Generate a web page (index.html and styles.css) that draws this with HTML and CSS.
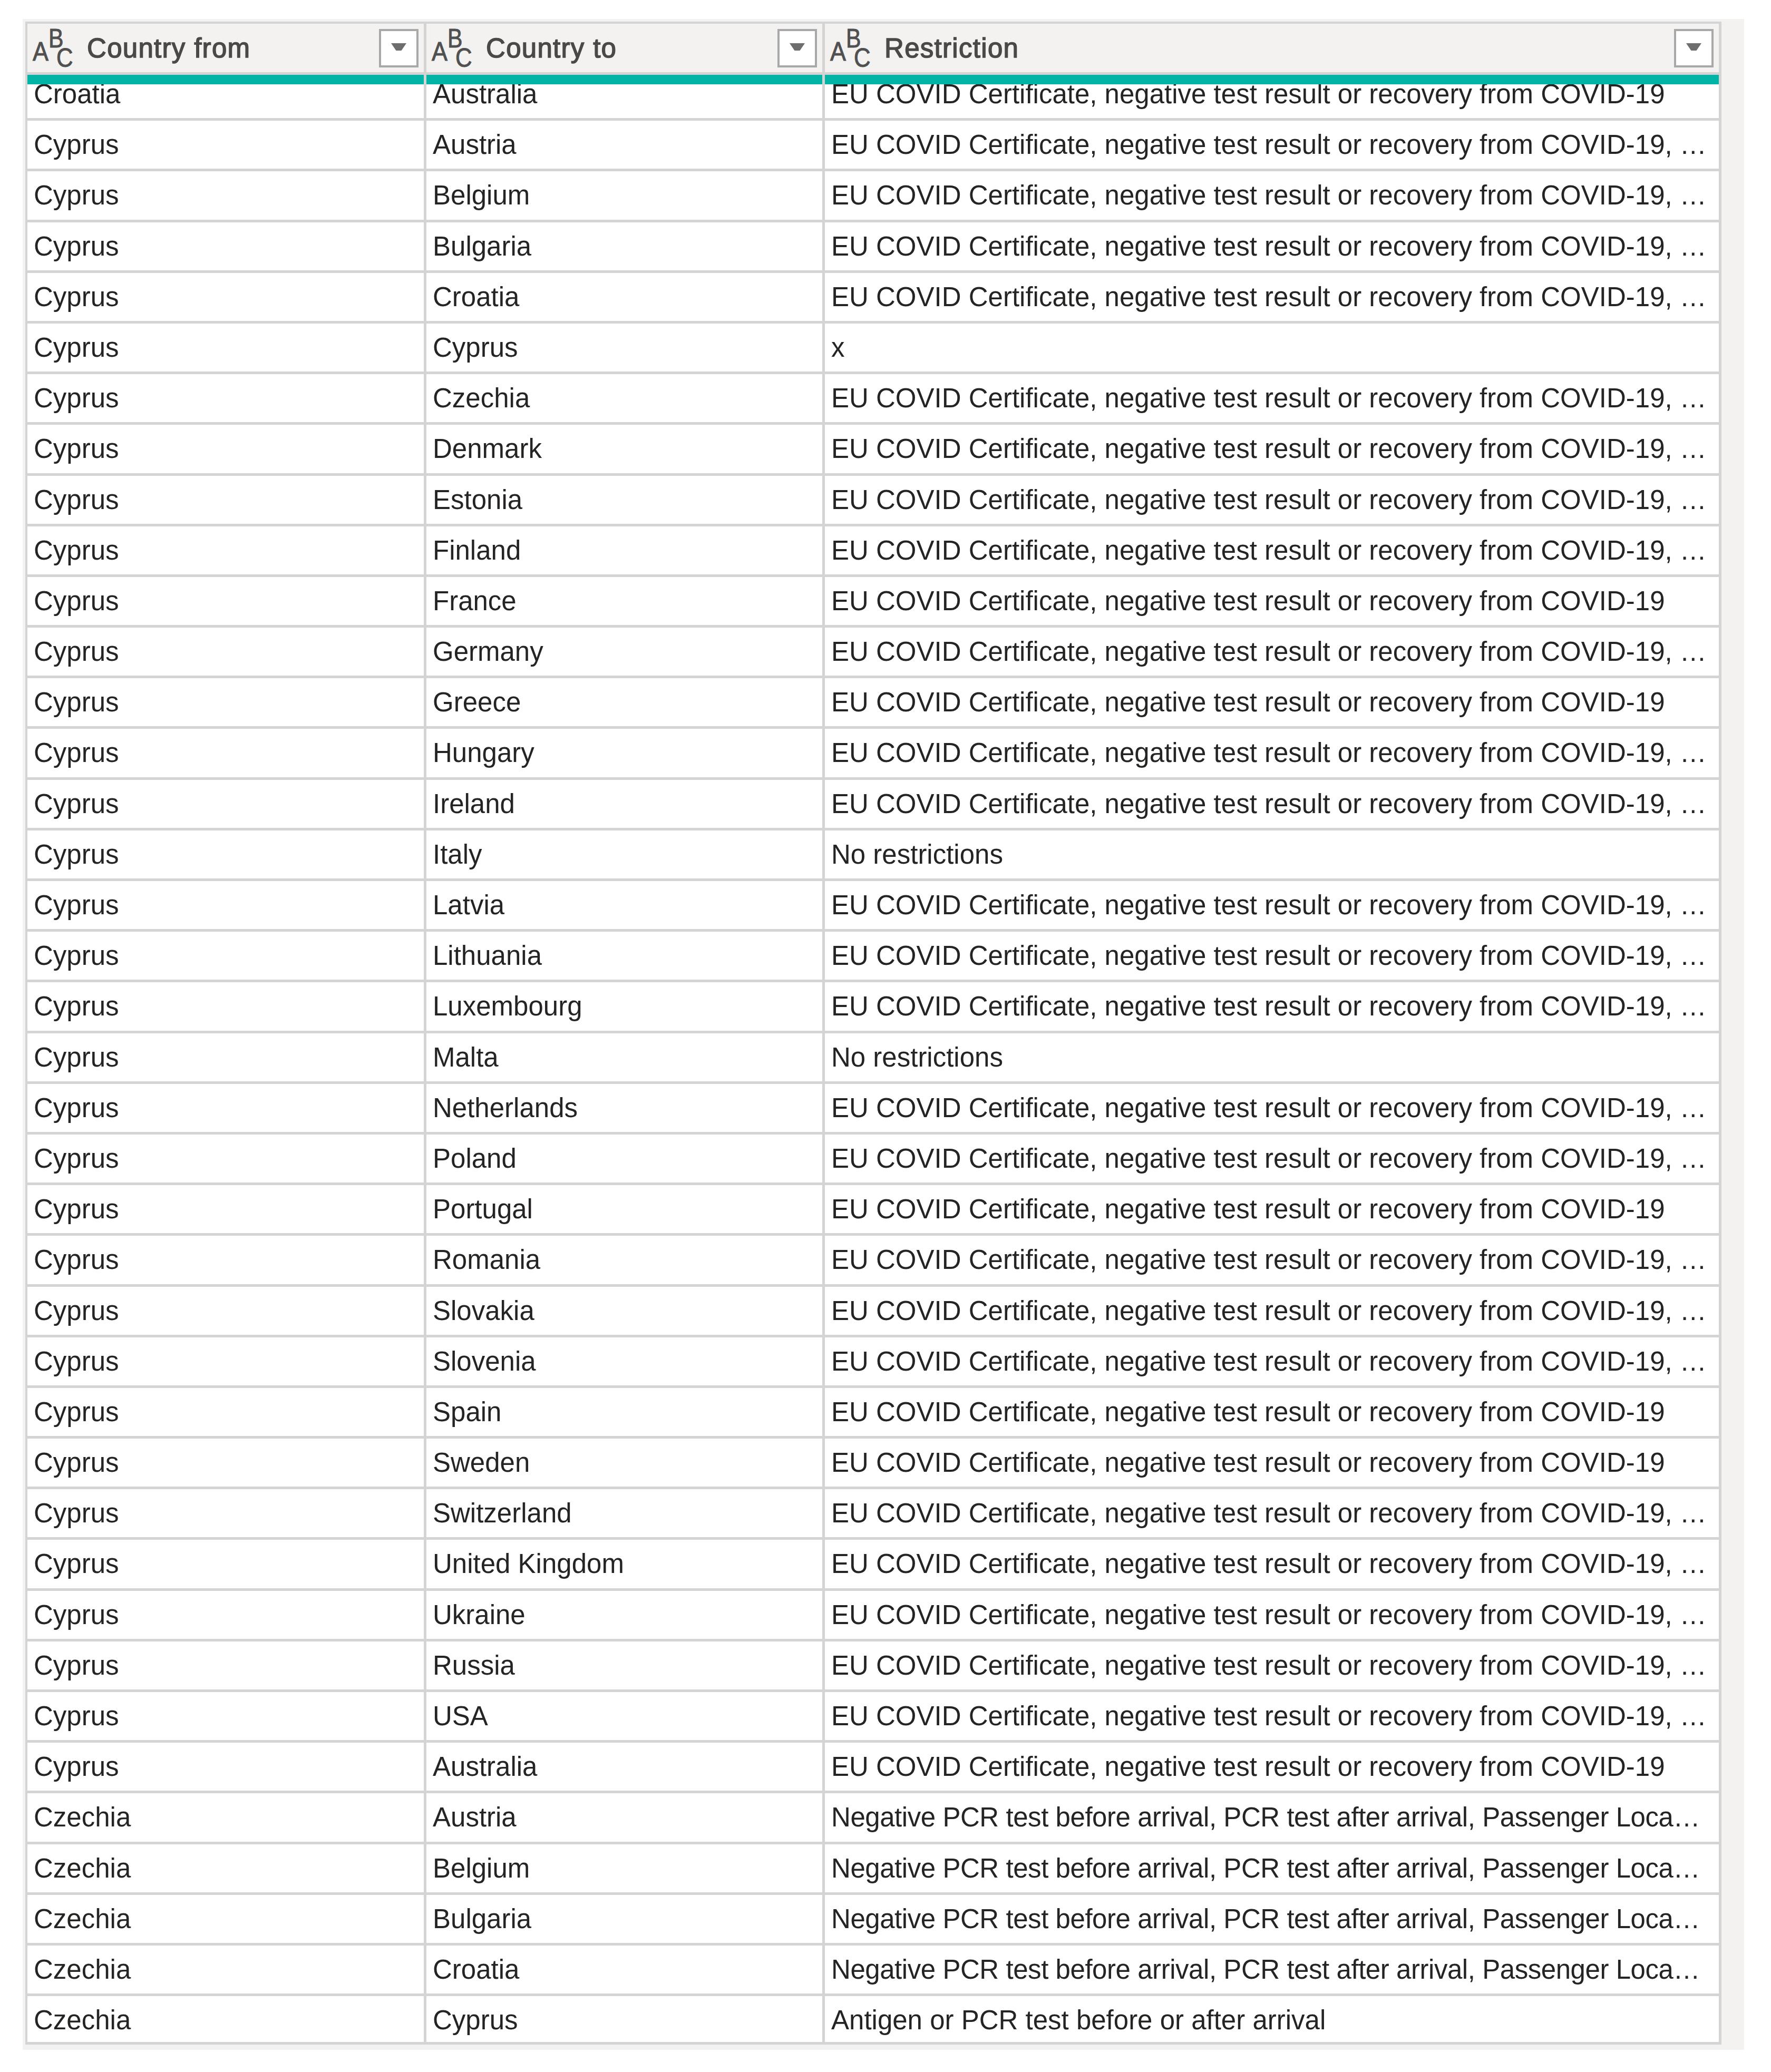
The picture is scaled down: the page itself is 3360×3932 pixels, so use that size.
FILE: index.html
```html
<!DOCTYPE html>
<html lang="en">
<head>
    <meta charset="UTF-8">
    <meta name="viewport" content="width=device-width, initial-scale=1.0">
    <link rel="stylesheet" href="styles.css">
</head>
<body>
    <div class="frame">
    <div class="grid">
        <div class="cols head">
            <div class="th">
                <svg class="abc" width="76" height="73" viewBox="0 0 76 73">
                    <text x="0" y="60" textLength="30" lengthAdjust="spacingAndGlyphs">A</text>
                    <text x="30" y="35" textLength="28.5" lengthAdjust="spacingAndGlyphs">B</text>
                    <text x="45" y="72" textLength="31.6" lengthAdjust="spacingAndGlyphs">C</text>
                </svg>
                <span class="th-title">Country from</span>
                <span class="dd"><svg width="29" height="14" viewBox="0 0 29 14"><polygon points="0,0 29,0 19.5,14 9.5,14"/></svg></span>
            </div>
            <div class="th">
                <svg class="abc" width="76" height="73" viewBox="0 0 76 73">
                    <text x="0" y="60" textLength="30" lengthAdjust="spacingAndGlyphs">A</text>
                    <text x="30" y="35" textLength="28.5" lengthAdjust="spacingAndGlyphs">B</text>
                    <text x="45" y="72" textLength="31.6" lengthAdjust="spacingAndGlyphs">C</text>
                </svg>
                <span class="th-title">Country to</span>
                <span class="dd"><svg width="29" height="14" viewBox="0 0 29 14"><polygon points="0,0 29,0 19.5,14 9.5,14"/></svg></span>
            </div>
            <div class="th">
                <svg class="abc" width="76" height="73" viewBox="0 0 76 73">
                    <text x="0" y="60" textLength="30" lengthAdjust="spacingAndGlyphs">A</text>
                    <text x="30" y="35" textLength="28.5" lengthAdjust="spacingAndGlyphs">B</text>
                    <text x="45" y="72" textLength="31.6" lengthAdjust="spacingAndGlyphs">C</text>
                </svg>
                <span class="th-title">Restriction</span>
                <span class="dd"><svg width="29" height="14" viewBox="0 0 29 14"><polygon points="0,0 29,0 19.5,14 9.5,14"/></svg></span>
            </div>
        </div>
        <div class="cols accent"><span></span><span></span><span></span></div>
        <div class="body" id="rows"></div>
    </div>
    </div>

    <script>
        const EU = 'EU COVID Certificate, negative test result or recovery from COVID-19';
        const EUT = EU + ', \u2026';
        const PCR = 'Negative PCR test before arrival, PCR test after arrival, Passenger Loca\u2026';
        const NONE = 'No restrictions';

        const data = [
            ['Croatia', 'Australia', EU],
            ['Cyprus', 'Austria', EUT],
            ['Cyprus', 'Belgium', EUT],
            ['Cyprus', 'Bulgaria', EUT],
            ['Cyprus', 'Croatia', EUT],
            ['Cyprus', 'Cyprus', 'x'],
            ['Cyprus', 'Czechia', EUT],
            ['Cyprus', 'Denmark', EUT],
            ['Cyprus', 'Estonia', EUT],
            ['Cyprus', 'Finland', EUT],
            ['Cyprus', 'France', EU],
            ['Cyprus', 'Germany', EUT],
            ['Cyprus', 'Greece', EU],
            ['Cyprus', 'Hungary', EUT],
            ['Cyprus', 'Ireland', EUT],
            ['Cyprus', 'Italy', NONE],
            ['Cyprus', 'Latvia', EUT],
            ['Cyprus', 'Lithuania', EUT],
            ['Cyprus', 'Luxembourg', EUT],
            ['Cyprus', 'Malta', NONE],
            ['Cyprus', 'Netherlands', EUT],
            ['Cyprus', 'Poland', EUT],
            ['Cyprus', 'Portugal', EU],
            ['Cyprus', 'Romania', EUT],
            ['Cyprus', 'Slovakia', EUT],
            ['Cyprus', 'Slovenia', EUT],
            ['Cyprus', 'Spain', EU],
            ['Cyprus', 'Sweden', EU],
            ['Cyprus', 'Switzerland', EUT],
            ['Cyprus', 'United Kingdom', EUT],
            ['Cyprus', 'Ukraine', EUT],
            ['Cyprus', 'Russia', EUT],
            ['Cyprus', 'USA', EUT],
            ['Cyprus', 'Australia', EU],
            ['Czechia', 'Austria', PCR],
            ['Czechia', 'Belgium', PCR],
            ['Czechia', 'Bulgaria', PCR],
            ['Czechia', 'Croatia', PCR],
            ['Czechia', 'Cyprus', 'Antigen or PCR test before or after arrival']
        ];

        // 建立表格列
        const body = document.getElementById('rows');
        data.forEach(function(r) {
            const row = document.createElement('div');
            row.className = 'cols row';
            r.forEach(function(v) {
                const td = document.createElement('div');
                td.className = 'td';
                if (v === PCR) td.className += ' tight';
                td.textContent = v;
                row.appendChild(td);
            });
            body.appendChild(row);
        });
    </script>
</body>
</html>
```

FILE: styles.css
```css
body {
    margin: 0;
    background-color: #ffffff;
    font-family: "Liberation Sans", Arial, sans-serif;
}
.frame {
    box-sizing: border-box;
    width: 3266px;
    margin: 36px 0 0 43px;
    padding: 5px 43px 10px 5px;
    background-color: #f3f2f1;
}
.grid {
    border-style: solid;
    border-color: #d4d4d4;
    border-width: 4px 5px 5px 4px;
    background-color: #d4d4d4;
}
.cols {
    display: grid;
    grid-template-columns: 752px 751px 1696px;
    column-gap: 5px;
}
.head {
    margin-bottom: 5px;
}
.th {
    box-sizing: border-box;
    height: 92px;
    display: flex;
    align-items: center;
    padding: 0 10px;
    background-color: #f3f2f1;
}
.abc {
    flex: none;
    overflow: visible;
}
.abc text {
    font-family: "Liberation Sans", Arial, sans-serif;
    font-size: 50px;
    fill: #505050;
    stroke: #505050;
    stroke-width: 1px;
}
.th-title {
    flex: 1;
    margin-left: 27px;
    font-size: 51px;
    letter-spacing: 1.3px;
    color: #4a4948;
    -webkit-text-stroke: 1.5px #4a4948;
    white-space: nowrap;
}
.dd {
    box-sizing: border-box;
    width: 75px;
    height: 73px;
    display: flex;
    align-items: center;
    justify-content: center;
    padding-bottom: 5px;
    border: 4px solid #a8a8a8;
    background-color: #ffffff;
}
.dd polygon {
    fill: #6e6e6e;
}
.accent span {
    height: 18px;
    background-color: #01b4a6;
}
.body {
    height: 3715px;
    overflow: hidden;
    display: flex;
    flex-direction: column;
    gap: 5px;
}
.row {
    flex: none;
}
.row:first-child {
    margin-top: -27px;
}
.td {
    box-sizing: border-box;
    height: 91.2px;
    padding: 1px 0 0 12px;
    line-height: 90px;
    font-size: 51px;
    color: #252423;
    background-color: #ffffff;
    white-space: nowrap;
    overflow: hidden;
}
.tight {
    letter-spacing: -0.45px;
}
```
